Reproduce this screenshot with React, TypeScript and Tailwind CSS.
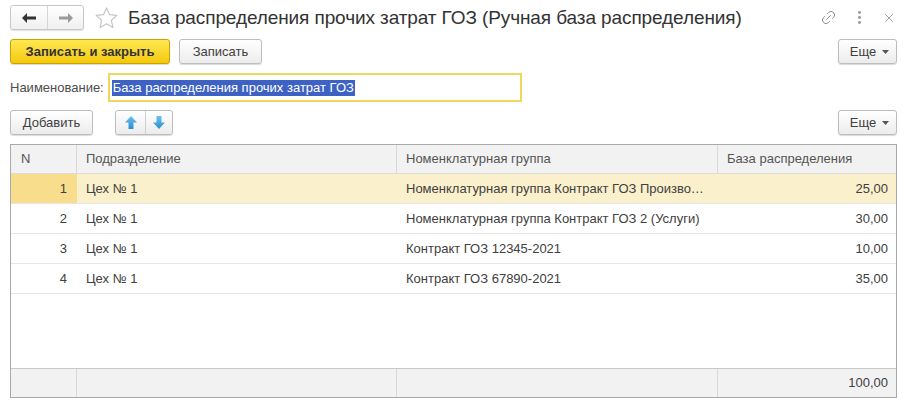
import { Link2, MoreVertical, X } from 'lucide-react';

type Row = {
  n: number;
  dept: string;
  group: string;
  base: string;
};

const rows: Row[] = [
  { n: 1, dept: 'Цех № 1', group: 'Номенклатурная группа Контракт ГОЗ Производство', base: '25,00' },
  { n: 2, dept: 'Цех № 1', group: 'Номенклатурная группа Контракт ГОЗ 2 (Услуги)', base: '30,00' },
  { n: 3, dept: 'Цех № 1', group: 'Контракт ГОЗ 12345-2021', base: '10,00' },
  { n: 4, dept: 'Цех № 1', group: 'Контракт ГОЗ 67890-2021', base: '35,00' },
];

const btn =
  'h-[25px] rounded-[3px] border border-[#bdbdbd] bg-gradient-to-b from-white to-[#ececec] shadow-[0_1px_1px_rgba(0,0,0,0.15)] text-[13px] text-[#404040] flex items-center';

function MoreButton() {
  return (
    <button className={`${btn} w-[59px] justify-center gap-[6px] pl-1`}>
      <span>Еще</span>
      <svg width="7" height="4" viewBox="0 0 7 4">
        <path d="M0 0h7L3.5 4z" fill="#555" />
      </svg>
    </button>
  );
}

function ArrowIcon({ up }: { up: boolean }) {
  return (
    <svg width="12" height="13" viewBox="0 0 12 13">
      <defs>
        <linearGradient id={up ? 'ga' : 'gb'} x1="0" y1="0" x2="0" y2="1">
          <stop offset="0" stopColor="#6cc1ee" />
          <stop offset="1" stopColor="#2a8fd0" />
        </linearGradient>
      </defs>
      <path
        d={up ? 'M6 0L12 6.5H8.5V13H3.5V6.5H0z' : 'M6 13L12 6.5H8.5V0H3.5V6.5H0z'}
        fill={`url(#${up ? 'ga' : 'gb'})`}
      />
    </svg>
  );
}

export default function App() {
  return (
    <div
      className="w-[908px] h-[406px] bg-white text-[13px] text-[#4d4d4d] overflow-hidden"
      style={{ fontFamily: 'Arial, "Liberation Sans", sans-serif' }}
    >
      {/* title bar */}
      <div className="flex items-center h-[34px] pl-[10px] pr-[12px] pt-[1px]">
        <div className="flex h-[25px] rounded-[3px] border border-[#c8c8c8] bg-gradient-to-b from-white to-[#f0f0f0] shadow-[0_1px_1px_rgba(0,0,0,0.12)]">
          <div className="w-[37px] flex items-center justify-center border-r border-[#d6d6d6]">
            <svg width="14" height="10" viewBox="0 0 14 10">
              <path d="M0 5L5 0v3.5h9v3H5V10z" fill="#333" />
            </svg>
          </div>
          <div className="w-[35px] flex items-center justify-center">
            <svg width="14" height="10" viewBox="0 0 14 10">
              <path d="M14 5L9 0v3.5H0v3h9V10z" fill="#9a9a9a" />
            </svg>
          </div>
        </div>
        <svg className="ml-[11px]" width="23" height="22" viewBox="0 0 24 23">
          <path
            d="M12 1l3.2 7 7.6.8-5.7 5.1 1.6 7.5L12 17.6l-6.7 3.8 1.6-7.5L1.2 8.8 8.8 8z"
            fill="none"
            stroke="#c4c4c4"
            strokeWidth="1.2"
            strokeLinejoin="round"
          />
        </svg>
        <div className="ml-[10px] text-[19px] text-[#333] leading-none tracking-[-0.1px]">
          База распределения прочих затрат ГОЗ (Ручная база распределения)
        </div>
        <div className="ml-auto flex items-center gap-[14px] text-[#8a8a8a]">
          <Link2 size={17} strokeWidth={1.3} className="-rotate-45" />
          <MoreVertical size={17} strokeWidth={2.2} className="text-[#9a9a9a]" />
          <X size={14} strokeWidth={1.4} />
        </div>
      </div>

      {/* command bar */}
      <div className="flex items-center pl-[10px] pr-[11px] mt-[5px]">
        <button className="h-[25px] w-[160px] rounded-[3px] border border-[#c9a400] bg-gradient-to-b from-[#ffe84d] to-[#f4c800] shadow-[0_1px_1px_rgba(0,0,0,0.15)] text-[13px] font-bold text-[#333] flex items-center justify-center">
          Записать и закрыть
        </button>
        <button className={`${btn} ml-[9px] w-[83px] justify-center`}>Записать</button>
        <div className="ml-auto">
          <MoreButton />
        </div>
      </div>

      {/* name field */}
      <div className="flex items-center pl-[10px] mt-[9px] h-[29px]">
        <span className="text-[13px] text-[#4d4d4d]">Наименование:</span>
        <div className="ml-[4px] w-[414px] h-[29px] border-2 border-[#f0d65e] flex items-center px-[2px]">
          <span className="bg-[#3d62c4] text-white px-[1px] leading-[16px] text-[13px]">
            База распределения прочих затрат ГОЗ
          </span>
        </div>
      </div>

      {/* table command bar */}
      <div className="flex items-center pl-[10px] pr-[11px] mt-[8px]">
        <button className={`${btn} w-[83px] justify-center`}>Добавить</button>
        <div className={`${btn} ml-[22px] w-[58px]`}>
          <div className="w-[30px] h-full flex items-center justify-center border-r border-[#d0d0d0]">
            <ArrowIcon up />
          </div>
          <div className="flex-1 h-full flex items-center justify-center">
            <ArrowIcon up={false} />
          </div>
        </div>
        <div className="ml-auto">
          <MoreButton />
        </div>
      </div>

      {/* table */}
      <div className="mx-[10px] mr-[11px] mt-[9px] h-[254px] border border-[#a9a9a9] flex flex-col">
        <div className="grid grid-cols-[66px_320px_321px_1fr] h-[29px] bg-[#f2f2f2] border-b border-[#dcdcdc] text-[#555]">
          <div className="flex items-center pl-[10px] border-r border-[#d8d8d8]">N</div>
          <div className="flex items-center pl-[9px] border-r border-[#d8d8d8]">Подразделение</div>
          <div className="flex items-center pl-[9px] border-r border-[#d8d8d8]">Номенклатурная группа</div>
          <div className="flex items-center pl-[9px]">База распределения</div>
        </div>
        <div className="flex-1">
          {rows.map((r, i) => {
            const sel = i === 0;
            return (
              <div
                key={r.n}
                className={`grid grid-cols-[66px_320px_321px_1fr] h-[30px] border-b border-[#e6e6e6] text-[#404040] ${
                  sel ? 'bg-[#fbf0cc]' : 'bg-white'
                }`}
              >
                <div
                  className={`flex items-center justify-end pr-[10px] ${sel ? 'bg-[#f8dd8c]' : ''}`}
                >
                  {r.n}
                </div>
                <div className="flex items-center pl-[9px]">{r.dept}</div>
                <div className="flex items-center pl-[9px] pr-[8px] min-w-0">
                  <span className="truncate">{r.group}</span>
                </div>
                <div className="flex items-center justify-end pr-[8px]">{r.base}</div>
              </div>
            );
          })}
        </div>
        <div className="grid grid-cols-[66px_320px_321px_1fr] h-[29px] bg-[#f2f2f2] border-t border-[#c8c8c8] text-[#404040]">
          <div className="border-r border-[#d8d8d8]" />
          <div className="border-r border-[#d8d8d8]" />
          <div className="border-r border-[#d8d8d8]" />
          <div className="flex items-center justify-end pr-[8px]">100,00</div>
        </div>
      </div>
    </div>
  );
}
